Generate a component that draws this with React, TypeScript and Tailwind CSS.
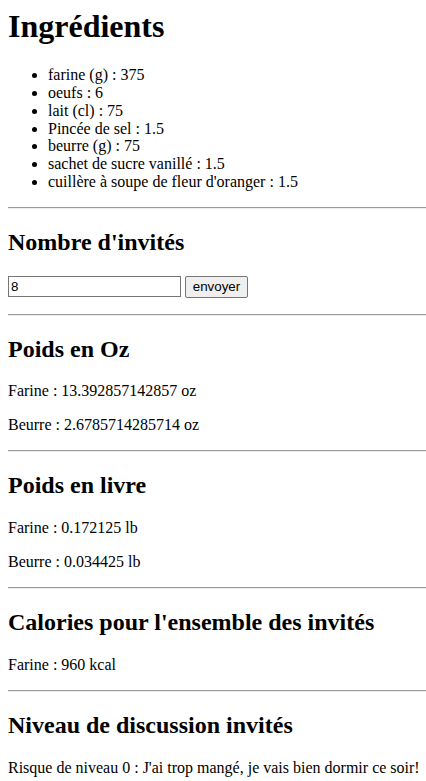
import { useState } from "react";

const ingredients = [
  "farine (g) : 375",
  "oeufs : 6",
  "lait (cl) : 75",
  "Pincée de sel : 1.5",
  "beurre (g) : 75",
  "sachet de sucre vanillé : 1.5",
  "cuillère à soupe de fleur d'oranger : 1.5",
];

function Rule() {
  return <hr className="my-2 border-t border-b border-t-[#9a9a9a] border-b-[#eeeeee] h-0" />;
}

function Title({ children }: any) {
  return <h2 className="text-[24px] font-bold leading-[27px] my-[19.92px]">{children}</h2>;
}

export default function App() {
  const [guests, setGuests] = useState("8");

  return (
    <div className="ml-2 mt-2 text-[16px] leading-[18px] text-black bg-white font-['Liberation_Serif',serif]">
      <h1 className="text-[32px] font-bold leading-[36.8px] mb-[21.44px]">Ingrédients</h1>
      <ul className="list-disc pl-10 my-4 leading-[17.8px]">
        {ingredients.map((item) => (
          <li key={item}>{item}</li>
        ))}
      </ul>
      <Rule />

      <Title>Nombre d'invités</Title>
      <form className="mb-4 flex items-center gap-1" onSubmit={(e) => e.preventDefault()}>
        <input
          type="text"
          value={guests}
          onChange={(e) => setGuests(e.target.value)}
          className="w-[173px] h-[21px] px-[2px] border border-[#767676] text-[13.33px] font-['Liberation_Sans',sans-serif] outline-none"
        />
        <button
          type="submit"
          className="w-[63px] h-[22px] border border-[#767676] rounded-[2px] bg-[#efefef] text-[13.33px] font-['Liberation_Sans',sans-serif]"
        >
          envoyer
        </button>
      </form>
      <Rule />

      <Title>Poids en Oz</Title>
      <p className="my-4">Farine : 13.392857142857 oz</p>
      <p className="my-4">Beurre : 2.6785714285714 oz</p>
      <Rule />

      <Title>Poids en livre</Title>
      <p className="my-4">Farine : 0.172125 lb</p>
      <p className="my-4">Beurre : 0.034425 lb</p>
      <Rule />

      <Title>Calories pour l'ensemble des invités</Title>
      <p className="my-4">Farine : 960 kcal</p>
      <Rule />

      <Title>Niveau de discussion invités</Title>
      <p className="my-4">Risque de niveau 0 : J'ai trop mangé, je vais bien dormir ce soir!</p>
    </div>
  );
}
